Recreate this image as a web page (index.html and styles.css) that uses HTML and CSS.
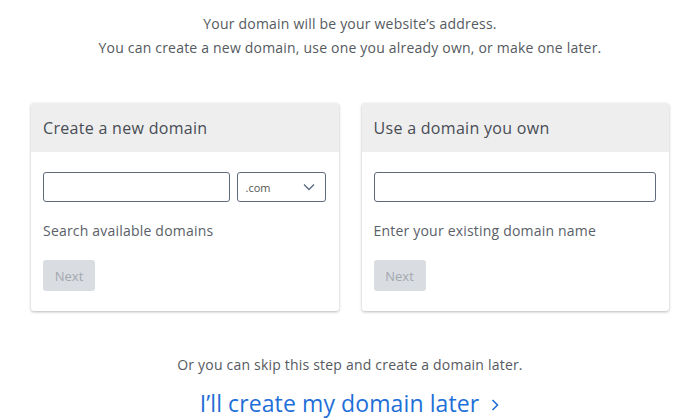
FILE: index.html
```html
<!DOCTYPE html>
<html>
<head>
<meta charset="utf-8">
<link rel="stylesheet" href="styles.css">
</head>
<body>
<div class="page">
  <div class="intro">
    <p>Your domain will be your website’s address.</p>
    <p>You can create a new domain, use one you already own, or make one later.</p>
  </div>
  <div class="cards">
    <div class="card">
      <div class="card-head">Create a new domain</div>
      <div class="card-body">
        <div class="row">
          <div class="input grow"></div>
          <div class="select"><span>.com</span>
            <svg width="12" height="8" viewBox="0 0 12 8"><path d="M1 1.5 L6 6.5 L11 1.5" fill="none" stroke="#5a6a80" stroke-width="1.3"/></svg>
          </div>
        </div>
        <div class="hint">Search available domains</div>
        <div class="btn">Next</div>
      </div>
    </div>
    <div class="card">
      <div class="card-head">Use a domain you own</div>
      <div class="card-body">
        <div class="row">
          <div class="input grow"></div>
        </div>
        <div class="hint">Enter your existing domain name</div>
        <div class="btn">Next</div>
      </div>
    </div>
  </div>
  <div class="skip">Or you can skip this step and create a domain later.</div>
  <div class="later">I’ll create my domain later
    <svg width="10" height="16" viewBox="0 0 10 16"><path d="M2.5 3 L7.5 8 L2.5 13" fill="none" stroke="#1f6fd8" stroke-width="1.6"/></svg>
  </div>
</div>
</body>
</html>
```

FILE: styles.css
```css
* { box-sizing: border-box; }
html, body { margin: 0; padding: 0; background: #fff; }
body { font-family: "Open Sans", "Noto Sans", sans-serif; color: #555; }
.page { width: 700px; height: 420px; overflow: hidden; display: flex; flex-direction: column; align-items: center; }
.intro { padding-top: 12px; text-align: center; font-size: 14px; letter-spacing: 0.2px; line-height: 24px; color: #555a60; }
.intro p { margin: 0; }
.cards { margin-top: 43px; display: flex; gap: 23px; width: 638px; }
.card { flex: 1; background: #fff; border-radius: 3px; box-shadow: 0 1px 3px rgba(0,0,0,0.28); overflow: hidden; }
.card-head { height: 49px; background: #eeeeee; padding: 0 12px; display: flex; align-items: center; font-size: 16px; letter-spacing: 0.3px; color: #474c55; }
.card-body { padding: 20px 13px 20px 12px; }
.row { display: flex; gap: 7px; }
.input { height: 30px; border: 1px solid #5f6b7d; border-radius: 3px; background: #fff; }
.grow { flex: 1; }
.select { width: 89px; height: 30px; border: 1px solid #5f6b7d; border-radius: 3px; display: flex; align-items: center; justify-content: space-between; padding: 0 10px 0 8px; font-size: 11px; color: #555; }
.hint { margin-top: 19px; font-size: 14px; letter-spacing: 0.2px; line-height: 20px; color: #5a6068; }
.btn { margin-top: 19px; width: 52px; height: 31px; border-radius: 3px; background: #d9dce1; color: #a3a8af; font-size: 13px; display: flex; align-items: center; justify-content: center; }
.skip { margin-top: 44px; font-size: 14px; letter-spacing: 0.2px; line-height: 20px; color: #555a60; }
.later { margin-top: 12px; font-size: 23px; letter-spacing: 0.1px; line-height: 32px; color: #1f6fd8; display: flex; align-items: center; gap: 11px; }
.later svg { margin-top: 3px; }
```
